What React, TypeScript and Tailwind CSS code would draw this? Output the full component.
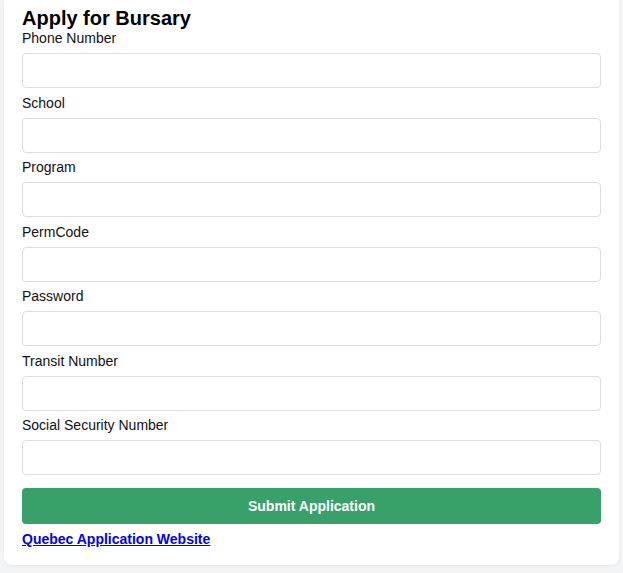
export default function App() {
  const fields = ["Phone Number", "School", "Program", "PermCode", "Password", "Transit Number", "Social Security Number"];
  return (
    <div className="min-h-[573px] bg-[#f3f4f6] px-[4px] pb-[9px]" style={{ fontFamily: '"Liberation Sans", Arial, sans-serif' }}>
      <div className="bg-white rounded-b-[8px] shadow-[0_1px_3px_rgba(0,0,0,0.06)] px-[18px] pt-[6px] pb-[17px]">
        <h1 className="text-[20px] leading-[24px] font-bold text-black">Apply for Bursary</h1>
        {fields.map((f) => (
          <div key={f} className="mb-[6.5px]">
            <label className="block text-[14px] leading-[17px] text-[#111] mb-[6px]">{f}</label>
            <input type={f === "Password" ? "password" : "text"} className="block w-full h-[35px] border border-[#dddddd] rounded-[4px] bg-white px-2 outline-none" />
          </div>
        ))}
        <button className="mt-[6.5px] w-full h-[36px] bg-[#38a169] text-white font-bold text-[14px] rounded-[4px]">Submit Application</button>
        <div className="mt-[6px] leading-[17px]">
          <a href="#" className="text-[14px] font-bold text-[#0000ee] underline">Quebec Application Website</a>
        </div>
      </div>
    </div>
  );
}
